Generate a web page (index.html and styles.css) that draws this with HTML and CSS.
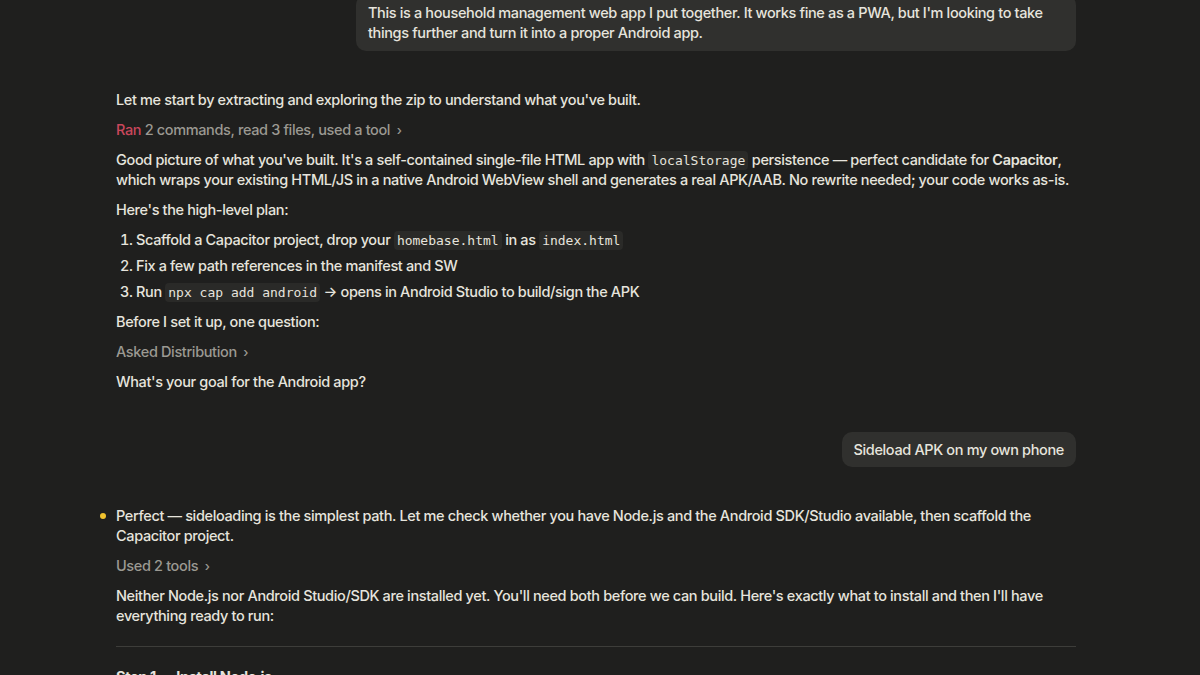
FILE: index.html
```html
<!DOCTYPE html>
<html lang="en">
<head>
<meta charset="utf-8">
<title>Chat</title>
<link rel="stylesheet" href="styles.css">
</head>
<body>
<main class="thread">
  <div class="user-row first">
    <div class="bubble wide">This is a household management web app I put together. It works fine as a PWA, but I'm looking to take things further and turn it into a proper Android app.</div>
  </div>

  <section class="reply">
    <p>Let me start by extracting and exploring the zip to understand what you've built.</p>
    <p class="tool"><span class="ran">Ran</span> 2 commands, read 3 files, used a tool <span class="chev">›</span></p>
    <p>Good picture of what you've built. It's a self-contained single-file HTML app with <code>localStorage</code> persistence — perfect candidate for <strong>Capacitor</strong>, which wraps your existing HTML/JS in a native Android WebView shell and generates a real APK/AAB. No rewrite needed; your code works as-is.</p>
    <p>Here's the high-level plan:</p>
    <ol class="plan">
      <li>Scaffold a Capacitor project, drop your <code>homebase.html</code> in as <code>index.html</code></li>
      <li>Fix a few path references in the manifest and SW</li>
      <li>Run <code>npx cap add android</code> → opens in Android Studio to build/sign the APK</li>
    </ol>
    <p>Before I set it up, one question:</p>
    <p class="tool">Asked Distribution <span class="chev">›</span></p>
    <p>What's your goal for the Android app?</p>
  </section>

  <div class="user-row">
    <div class="bubble">Sideload APK on my own phone</div>
  </div>

  <section class="reply live">
    <span class="dot"></span>
    <p>Perfect — sideloading is the simplest path. Let me check whether you have Node.js and the Android SDK/Studio available, then scaffold the Capacitor project.</p>
    <p class="tool">Used 2 tools <span class="chev">›</span></p>
    <p>Neither Node.js nor Android Studio/SDK are installed yet. You'll need both before we can build. Here's exactly what to install and then I'll have everything ready to run:</p>
    <hr class="rule">
    <h3 class="step">Step 1 — Install Node.js</h3>
  </section>
</main>
</body>
</html>
```
FILE: styles.css
```css
html, body {
  margin: 0;
  padding: 0;
  background: #1f1f1e;
  overflow: hidden;
  height: 675px;
}
body {
  font-family: "Inter", "Liberation Sans", sans-serif;
  font-size: 14.5px;
  line-height: 20px;
  letter-spacing: -0.36px;
  color: #e6e4dd;
  font-weight: 450;
}
.thread {
  width: 960px;
  margin-left: 116px;
  display: flex;
  flex-direction: column;
}
.user-row {
  display: flex;
  justify-content: flex-end;
  margin-top: 40px;
}
.user-row.first {
  margin-top: -5px;
}
.bubble {
  background: #30302e;
  border-radius: 10px;
  padding: 8px 12px;
  max-width: 696px;
}
.user-row:not(.first) .bubble {
  padding: 8px 12px 7px;
}
.bubble.wide {
  width: 696px;
}
.reply {
  margin-top: 39px;
  display: flex;
  flex-direction: column;
  gap: 10px;
  position: relative;
}
.reply p {
  margin: 0;
}
.tool {
  color: #9b9992;
}
.ran {
  color: #c9475c;
}
.chev {
  margin-left: 3px;
  font-size: 13px;
}
strong {
  font-weight: 600;
}
code {
  font-family: "DejaVu Sans Mono", "Liberation Mono", monospace;
  font-size: 13px;
  line-height: 1;
  letter-spacing: 0;
  background: #2a2a28;
  border-radius: 4px;
  padding: 2px 3px;
  color: #e6e4dd;
}
.plan {
  margin: 0;
  padding-left: 20px;
  display: flex;
  flex-direction: column;
  gap: 6px;
}
.plan li {
  line-height: 20px;
  height: 20px;
}
.live .dot {
  position: absolute;
  left: -16px;
  top: 7px;
  width: 6px;
  height: 6px;
  border-radius: 50%;
  background: #f0c22e;
}
.rule {
  border: 0;
  border-top: 1px solid #3d3d3a;
  margin: 10px 0;
  height: 0;
}
.step {
  margin: 0;
  font-size: 14.5px;
  font-weight: 650;
  line-height: 20px;
}
```
